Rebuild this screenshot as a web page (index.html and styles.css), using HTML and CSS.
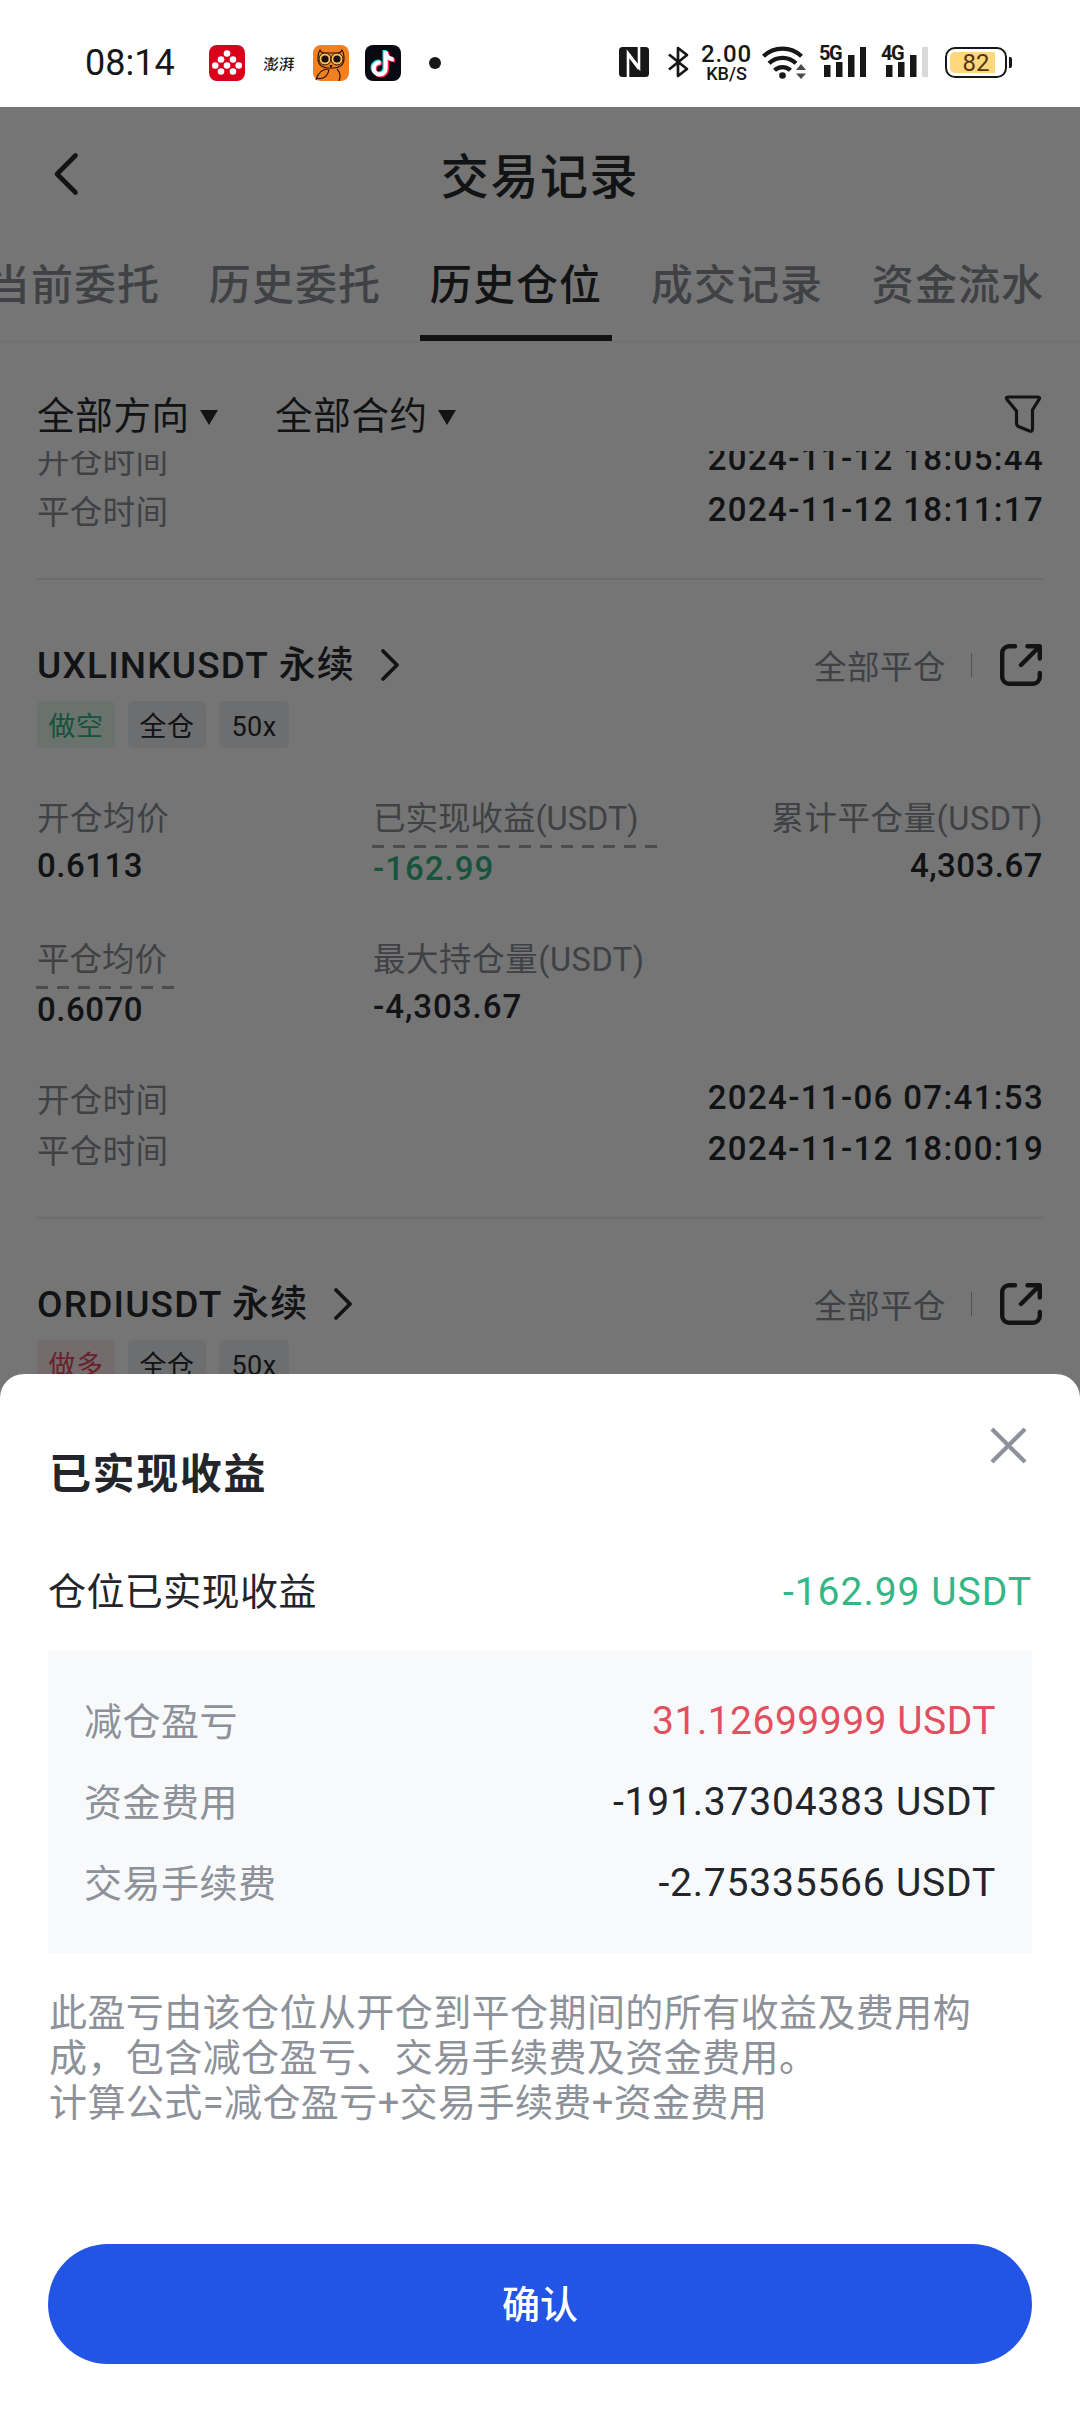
FILE: index.html
```html
<!DOCTYPE html>
<html lang="zh-CN">
<head>
<meta charset="utf-8">
<title>交易记录</title>
<link rel="stylesheet" href="styles.css">
</head>
<body>
<svg class="defs" width="0" height="0" aria-hidden="true">
  <symbol id="share" viewBox="0 0 42 42"><g fill="none" stroke="currentColor" stroke-width="4.4" stroke-linecap="round" stroke-linejoin="round"><path d="M15 2.2H9A6.800 6.800 0 0 0 2.200 9V33A6.800 6.800 0 0 0 9 39.800H33A6.800 6.800 0 0 0 39.800 33V29"/><path d="M27.500 2.200H39.800V14.500M39 3L21 21"/></g></symbol>
  <symbol id="next" viewBox="0 0 20 34"><path d="M3 3L17 17L3 31" fill="none" stroke="currentColor" stroke-width="3.800" stroke-linecap="round" stroke-linejoin="round"/></symbol>
</svg>
<div class="phone">
  <header class="status">
    <div class="status-left">
      <span class="clock">08:14</span>
      <svg class="app" viewBox="0 0 36 36"><rect width="36" height="36" rx="8" fill="#d9001b"/><g fill="#fff"><circle cx="18" cy="8.500" r="3.300"/><circle cx="12" cy="14.500" r="3.300"/><circle cx="24" cy="14.500" r="3.300"/><circle cx="6.300" cy="20.500" r="3.300"/><circle cx="18" cy="20.500" r="3.300"/><circle cx="29.700" cy="20.500" r="3.300"/><circle cx="12" cy="26.500" r="3.300"/><circle cx="24" cy="26.500" r="3.300"/></g></svg>
      <span class="paper">澎湃</span>
      <svg class="app" viewBox="0 0 36 36"><rect width="36" height="36" rx="8" fill="#f08022"/><g fill="none" stroke="#2b1503" stroke-width="1.200"><path d="M7 5c1 3 3 3 5 3h12c2 0 4 0 5-3 2 3 2 6 2 9 0 6-5 9-10 9h-6c-5 0-10-3-10-9 0-3 0-6 2-9z"/><path d="M3 35c2-7 6-11 12-11M3 33c6 2 12-1 13-9M24 24c3 3 4 7 2 12"/></g><g fill="#f9bb5c" stroke="#2b1503"><circle cx="12" cy="14" r="6"/><circle cx="24" cy="14" r="6"/></g><circle cx="12" cy="14" r="3.600" fill="#16110c"/><circle cx="24" cy="14" r="3.600" fill="#16110c"/><path d="M16.500 20L18 24l1.500-4z" fill="#2b1503"/></svg>
      <svg class="app" viewBox="0 0 36 36"><rect width="36" height="36" rx="8" fill="#090914"/><g fill="none" stroke-width="4"><path d="M19.500 5v17.500a6 6 0 1 1-5-5.900M19.500 6c.7 4.500 3.500 7.200 8 7.400" stroke="#25e5e4"/><path d="M22 7v17.500a6 6 0 1 1-5-5.900M22 8c.7 4.500 3.500 7.200 8 7.400" stroke="#fb2b55"/><path d="M20.700 6v17.500a6 6 0 1 1-5-5.900M20.700 7c.7 4.500 3.500 7.200 8 7.400" stroke="#fff"/></g></svg>
      <i class="dot"></i>
    </div>
    <div class="status-right">
      <svg class="nfc" viewBox="0 0 30 30"><rect width="30" height="30" rx="3.500" fill="#171717"/><path d="M9 30V6L20 20.500V0M9 7.500L20 22" fill="none" stroke="#fff" stroke-width="2.600"/></svg>
      <svg class="bt" viewBox="0 0 22 34"><path d="M2 9.500L20 24L11 31V3L20 10L2 24.500" fill="none" stroke="#171717" stroke-width="2.700" stroke-linejoin="round"/></svg>
      <div class="speed"><b>2.00</b><span>KB/S</span></div>
      <svg class="wifi" viewBox="0 0 44 36"><g fill="none" stroke="#171717" stroke-width="4.300"><path d="M1.500 12.200a27.500 27.500 0 0 1 38 0"/><path d="M7 19.300a19.400 19.400 0 0 1 27 0"/><path d="M12.500 26.300a11.500 11.500 0 0 1 16 0"/></g><circle cx="20.500" cy="31.500" r="3.300" fill="#171717"/><path d="M34 26l5-6 5 6zM34 29.500h10l-5 5.500z" fill="#4a4a4a"/></svg>
      <div class="signal"><span>5G</span><svg viewBox="0 0 43 31"><path d="M1 19h6.500v12H1zM13 16h6.500v15H13zM25 9h6.500v22H25zM37 1h6v30h-6z" fill="#171717"/></svg></div>
      <div class="signal second"><span>4G</span><svg viewBox="0 0 43 31"><path d="M1 19h6.500v12H1zM13 16h6.500v15H13zM25 9h6.500v22H25z" fill="#171717"/><path d="M37 1h6v30h-6z" fill="#d9d9d9"/></svg></div>
      <div class="battery"><span class="cell">82</span><i></i></div>
    </div>
  </header>

  <main class="screen">
    <div class="titlebar">
      <svg class="back" viewBox="0 0 26 44"><path d="M22.500 3.500L4 22L22.500 40.500" fill="none" stroke="currentColor" stroke-width="4.600" stroke-linecap="round" stroke-linejoin="round"/></svg>
      <h1>交易记录</h1>
    </div>
    <nav class="tabs"><span>当前委托</span><span>历史委托</span><span class="on">历史仓位</span><span>成交记录</span><span>资金流水</span></nav>
    <div class="filters">
      <span class="pick">全部方向<i></i></span><span class="pick">全部合约<i></i></span>
      <svg class="funnel" viewBox="0 0 38 40"><path d="M4 3H34Q36.500 3 35 5.500L28.500 16V35Q28.500 38 25.500 37L14.500 32.500Q12.500 31.500 12.500 29V17L3 5.500Q1.500 3 4 3Z" fill="none" stroke="currentColor" stroke-width="3.200"/></svg>
    </div>
    <section class="list">
      <article class="item cut">
        <div class="time"><span>开仓时间</span><b>2024-11-12 18:05:44</b></div>
        <div class="time"><span>平仓时间</span><b>2024-11-12 18:11:17</b></div>
      </article>
      <article class="item">
        <div class="head"><h2>UXLINKUSDT 永续</h2><svg class="next"><use href="#next"/></svg><span class="state">全部平仓</span><i class="bar"></i><svg class="share"><use href="#share"/></svg></div>
        <div class="tags"><span class="tag short">做空</span><span class="tag">全仓</span><span class="tag lever">50x</span></div>
        <div class="stats">
          <div><span class="label">开仓均价</span><b>0.6113</b></div>
          <div><span class="label hint wide">已实现收益(USDT)</span><b class="green minus">-162.99</b></div>
          <div class="right"><span class="label">累计平仓量(USDT)</span><b>4,303.67</b></div>
          <div><span class="label hint">平仓均价</span><b>0.6070</b></div>
          <div><span class="label">最大持仓量(USDT)</span><b class="minus">-4,303.67</b></div>
        </div>
        <div class="time"><span>开仓时间</span><b>2024-11-06 07:41:53</b></div>
        <div class="time"><span>平仓时间</span><b>2024-11-12 18:00:19</b></div>
      </article>
      <article class="item">
        <div class="head"><h2>ORDIUSDT 永续</h2><svg class="next"><use href="#next"/></svg><span class="state">全部平仓</span><i class="bar"></i><svg class="share"><use href="#share"/></svg></div>
        <div class="tags"><span class="tag long">做多</span><span class="tag">全仓</span><span class="tag lever">50x</span></div>
      </article>
    </section>
    <div class="mask"></div>
    <section class="sheet">
      <div class="sheet-head"><h3>已实现收益</h3><svg class="close" viewBox="0 0 38 38"><path d="M2 2L36 36M36 2L2 36" stroke="#8d9199" stroke-width="4.300"/></svg></div>
      <div class="total"><span>仓位已实现收益</span><em class="green">-162.99 USDT</em></div>
      <div class="box">
        <div><span>减仓盈亏</span><em class="red">31.12699999 USDT</em></div>
        <div><span>资金费用</span><em>-191.37304383 USDT</em></div>
        <div><span>交易手续费</span><em>-2.75335566 USDT</em></div>
      </div>
      <p class="note">此盈亏由该仓位从开仓到平仓期间的所有收益及费用构<br>成，包含减仓盈亏、交易手续费及资金费用。<br>计算公式=减仓盈亏+交易手续费+资金费用</p>
      <button class="ok">确认</button>
    </section>
  </main>
</div>
</body>
</html>
```
FILE: styles.css
```css
* { box-sizing: border-box; margin: 0; padding: 0; }
body { background: #fff; font-family: Roboto, "Noto Sans CJK SC", sans-serif; color: #292b2e; }
em, i { font-style: normal; }
svg { display: block; flex: none; }
.defs { position: absolute; }
.phone { width: 1080px; height: 2412px; overflow: hidden; display: flex; flex-direction: column; }

.status { height: 107px; flex: none; display: flex; justify-content: space-between; padding: 44px 68px 0 85px; color: #171717; }
.status-left, .status-right { display: flex; align-items: center; height: 37px; }
.clock { width: 124px; font-size: 36px; line-height: 38px; }
.app { width: 36px; height: 36px; }
.paper { width: 68px; text-align: center; font: 500 15.5px/36px "Noto Sans CJK SC", sans-serif; transform: skewX(-4deg); }
.app + .app { margin-left: 16px; }
.dot { width: 12px; height: 12px; margin-left: 28px; border-radius: 50%; background: #171717; }
.status-right { align-items: flex-start; }
.nfc { width: 30px; height: 30px; margin: 3px 19px 0 0; }
.bt { width: 22px; height: 34px; margin: 1px 12px 0 -1px; }
.speed { width: 51px; margin-right: 10px; display: flex; flex-direction: column; align-items: center; }
.speed b { font-size: 24px; line-height: 21px; font-weight: 500; letter-spacing: .9px; }
.speed span { font-size: 18px; line-height: 18px; font-weight: 500; }
.wifi { width: 44px; height: 36px; }
.signal { position: relative; width: 47px; height: 34px; margin-left: 13px; padding-left: 4px; }
.signal.second { margin-left: 15px; }
.signal span { position: absolute; left: 0; top: 1px; background: #fff; font-size: 20px; line-height: 16px; font-weight: 700; letter-spacing: -1.500px; }
.signal svg { width: 43px; height: 31px; margin-top: 2px; }
.battery { display: flex; align-items: center; gap: 2px; margin: 3px 0 0 17px; }
.cell { width: 62px; height: 31px; border: 2px solid #171717; border-radius: 10px; padding: 3px; text-align: center; font-size: 24px; line-height: 22px; color: #4d3613; background: linear-gradient(90deg, #ffd77c 45px, #fff 45px) content-box; }
.battery i { width: 3px; height: 11px; background: #171717; border-radius: 0 2px 2px 0; }

.screen { position: relative; height: 2305px; flex: none; overflow: hidden; background: #fff; }
.titlebar { height: 133px; display: grid; grid-template-columns: 1fr auto 1fr; align-items: center; padding: 0 53px; }
.back { width: 26px; height: 44px; }
h1 { font-size: 48px; line-height: 60px; font-weight: 500; letter-spacing: 1.600px; padding-top: 8px; }
.tabs { height: 102px; display: flex; justify-content: flex-end; gap: 29px; padding-right: 26px; border-bottom: 1px solid #f0f1f3; color: #8a8f96; }
.tabs span { flex: none; width: 192px; height: 101px; text-align: center; font-size: 42px; line-height: 91px; font-weight: 500; letter-spacing: 1.100px; white-space: nowrap; }
.tabs .on { color: #292b2e; border-bottom: 6px solid #292b2e; }
.filters { height: 109px; display: flex; align-items: center; padding: 38px 38px 0 37px; }
.pick { display: flex; align-items: center; width: 238px; font-size: 37.5px; letter-spacing: .7px; line-height: 46px; }
.pick i { border: 9px solid transparent; border-top: 15px solid currentColor; border-bottom: 0; margin-left: 10px; margin-top: 3px; }
.funnel { width: 38px; height: 40px; margin: -3px 0 0 auto; }

.list { height: 1400px; overflow: hidden; padding: 0 37px; }
.item { padding-bottom: 40px; border-bottom: 2px solid #eeeef0; }
.item.cut { margin-top: -15px; }
.time { height: 51px; display: flex; justify-content: space-between; align-items: flex-start; font-size: 33px; }
.time span, .label, .state { color: #8a8f96; font-size: 32.5px; letter-spacing: .3px; }
.time span { line-height: 52px; }
.time b, .stats b { font-weight: 500; }
.time b { line-height: 45px; letter-spacing: 1.350px; margin-right: -1px; }
.head { display: flex; align-items: center; height: 60px; margin-top: 55px; }
h2 { font-size: 37px; line-height: 61px; font-weight: 500; letter-spacing: 1.200px; white-space: nowrap; }
.next { width: 20px; height: 34px; margin: -1px 0 0 25px; }
.head .state { margin: 5px 0 0 auto; line-height: 50px; letter-spacing: .5px; }
.bar { width: 1px; height: 24px; margin: 0 28px 0 25px; background: #aeb2b7; }
.share { width: 42px; height: 42px; margin: -1px 1px 0 0; }
.tags { display: flex; gap: 13px; margin-top: 6px; }
.tag { height: 47px; width: 78px; border-radius: 5px; background: #ebeff3; text-align: center; font-size: 27px; line-height: 53px; letter-spacing: .5px; }
.tag.lever { width: 70px; }
.tag.short { background: #e6f8f0; color: #2fb583; }
.tag.long { background: #fcecec; color: #e04a5f; }
.stats { display: grid; grid-template-columns: 336px 1fr 340px; grid-template-rows: 141px 136px; margin-top: 50px; font-size: 33px; }
.stats > div { display: flex; flex-direction: column; align-items: flex-start; }
.stats > .right { align-items: flex-end; }
.label { height: 40px; margin-bottom: 10px; line-height: 42px; letter-spacing: .55px; white-space: nowrap; }
.label.hint { width: 138px; height: 51px; margin: 0 0 2px -1px; padding-left: 1px; letter-spacing: 0; background: repeating-linear-gradient(90deg, #a3a6ac 0 12px, transparent 12px 21px) 0 47px / 100% 3px no-repeat; }
.label.hint.wide { width: 286px; }
.stats b { line-height: 36px; letter-spacing: .5px; }
.stats .minus { letter-spacing: 1px; }
.green, .stats .green { color: #35b685; }
.red { color: #e2505f; }

.mask { position: absolute; inset: 0; background: rgba(0, 0, 0, .54); }
.sheet { position: absolute; left: 0; right: 0; top: 1267px; bottom: 0; padding: 0 48px; border-radius: 24px 24px 0 0; background: #fff; color: #23252b; font-size: 38px; }
.sheet-head { display: flex; justify-content: space-between; height: 187px; padding: 53px 5px 0 1px; }
h3 { font-size: 42px; line-height: 96px; font-weight: 700; letter-spacing: 1.600px; }
.close { width: 37px; height: 37px; }
.total { display: flex; justify-content: space-between; line-height: 63px; height: 90px; letter-spacing: .4px; }
.sheet em { font-size: 39px; letter-spacing: .8px; }
.sheet .total em { letter-spacing: 1px; }
.sheet em.red { letter-spacing: .5px; }
.box { height: 302px; padding: 31px 36px 0; background: #f7f9fb; border-radius: 3px; }
.box div { display: flex; justify-content: space-between; line-height: 81px; letter-spacing: .5px; }
.box em { line-height: 79px; }
.box span { color: #8d9199; }
.note { margin: 38px 0 0 1px; line-height: 45px; letter-spacing: .42px; color: #8d9199; white-space: nowrap; }
.ok { display: block; width: 984px; height: 120px; margin-top: 118px; border: 0; border-radius: 60px; background: #2254e6; color: #fff; font: 500 38px/122px Roboto, "Noto Sans CJK SC", sans-serif; }
```
